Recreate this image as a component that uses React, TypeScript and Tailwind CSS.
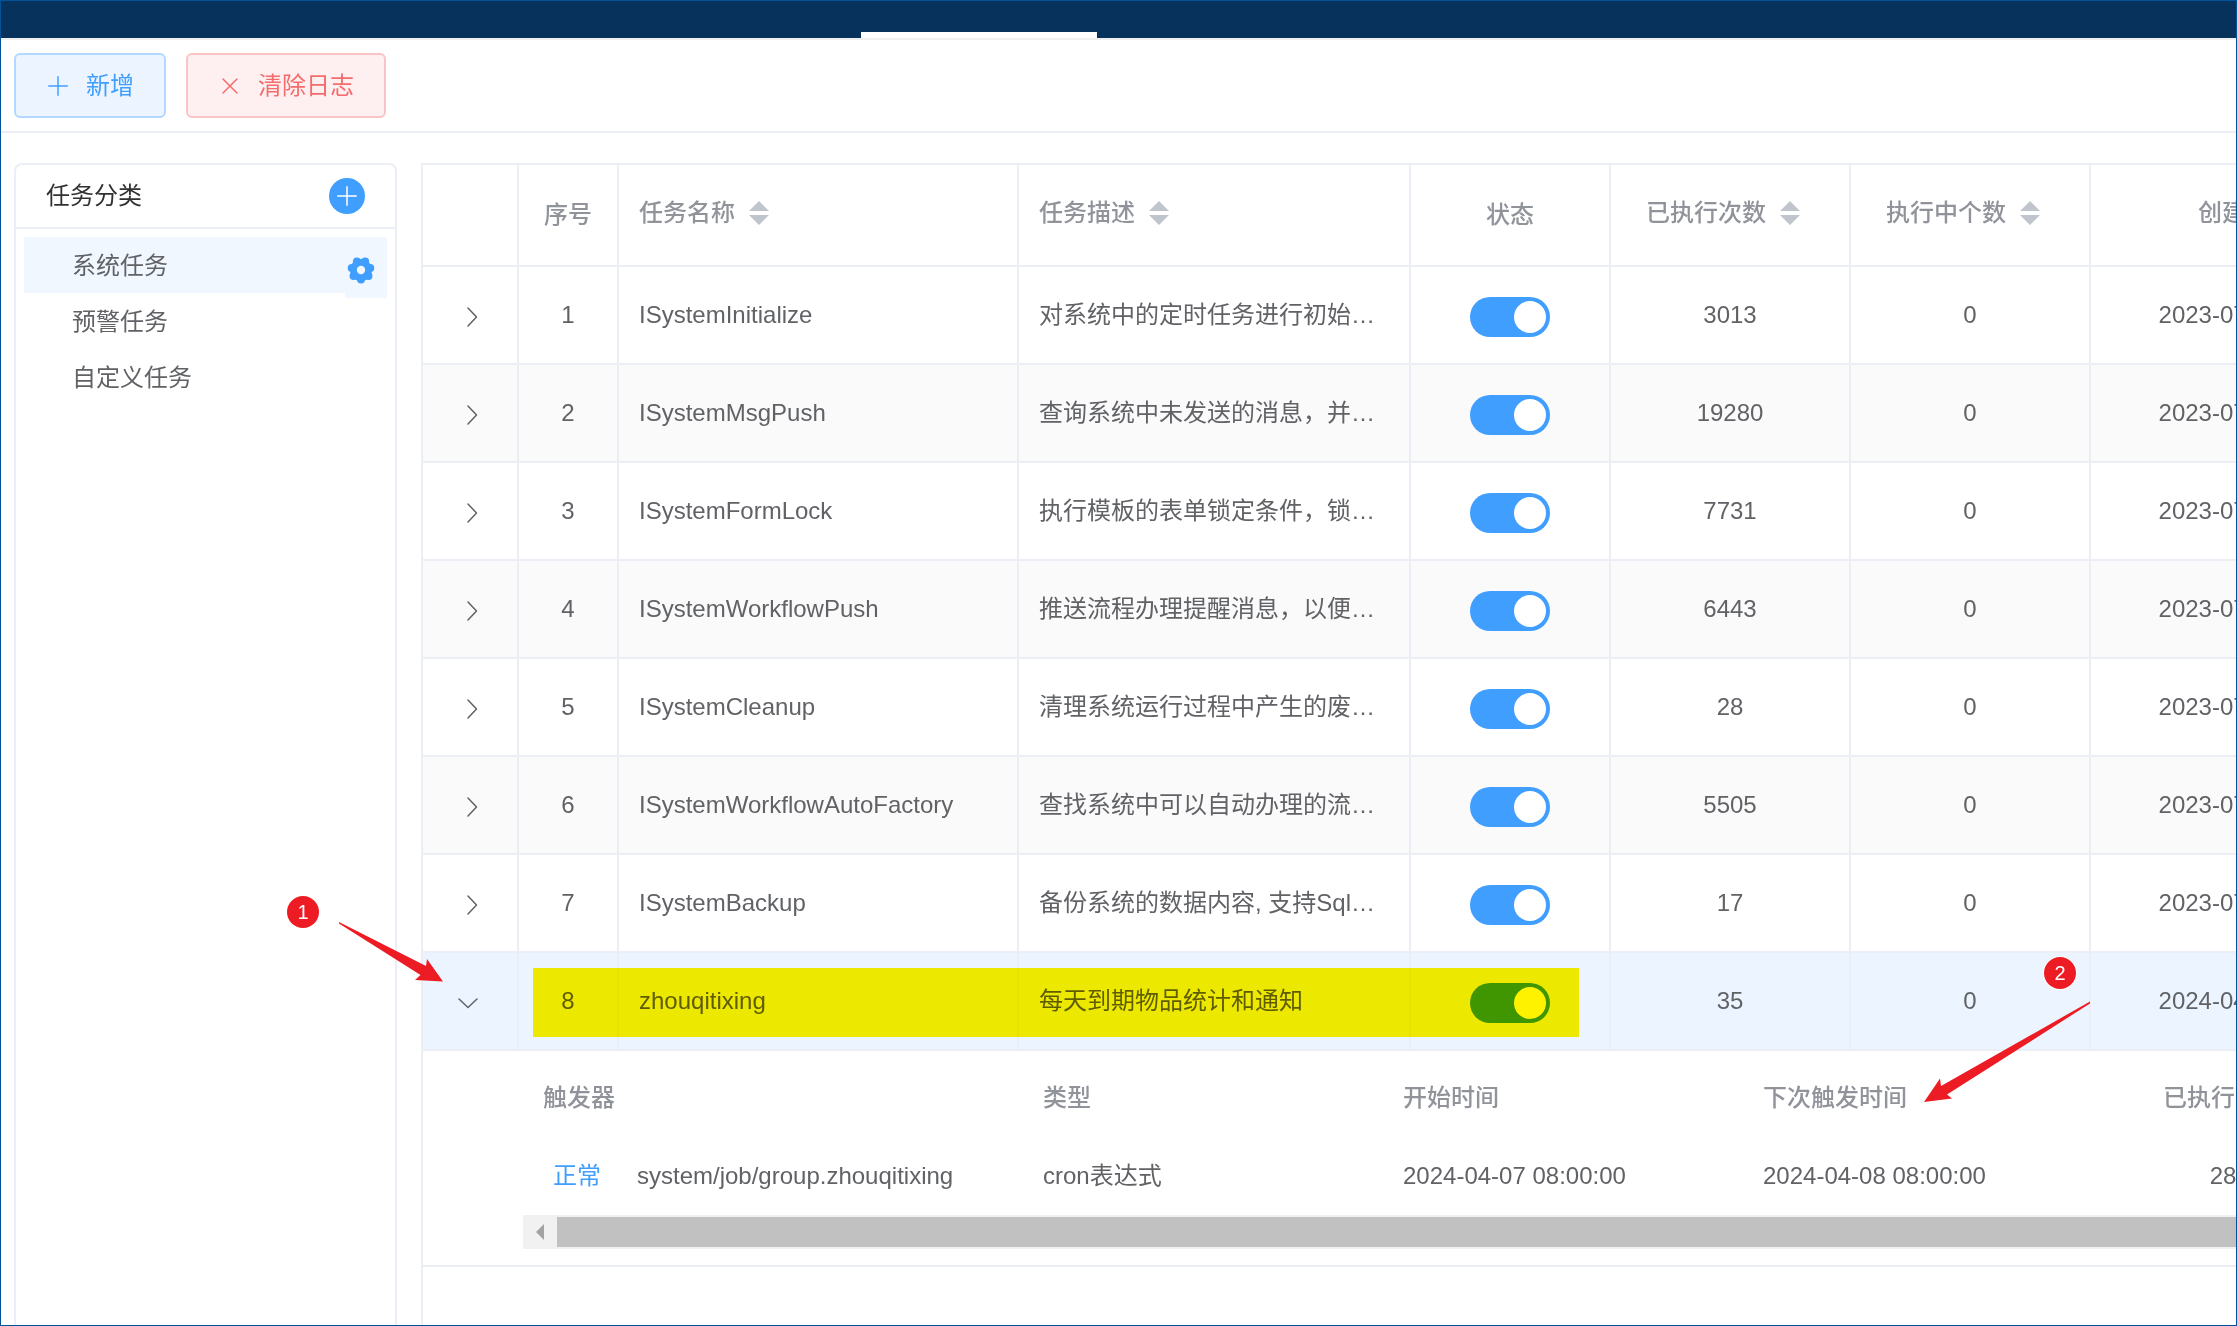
import React from "react";

type Task = { id: number; name: string; desc: string; runs: string; active: string; created: string; expanded?: boolean };

const tasks: Task[] = [
  { id: 1, name: "ISystemInitialize", desc: "对系统中的定时任务进行初始化操作", runs: "3013", active: "0", created: "2023-07-01 08:00:00" },
  { id: 2, name: "ISystemMsgPush", desc: "查询系统中未发送的消息，并进行推送", runs: "19280", active: "0", created: "2023-07-01 08:00:00" },
  { id: 3, name: "ISystemFormLock", desc: "执行模板的表单锁定条件，锁定表单", runs: "7731", active: "0", created: "2023-07-01 08:00:00" },
  { id: 4, name: "ISystemWorkflowPush", desc: "推送流程办理提醒消息，以便及时办理", runs: "6443", active: "0", created: "2023-07-01 08:00:00" },
  { id: 5, name: "ISystemCleanup", desc: "清理系统运行过程中产生的废弃数据", runs: "28", active: "0", created: "2023-07-01 08:00:00" },
  { id: 6, name: "ISystemWorkflowAutoFactory", desc: "查找系统中可以自动办理的流程数据", runs: "5505", active: "0", created: "2023-07-01 08:00:00" },
  { id: 7, name: "ISystemBackup", desc: "备份系统的数据内容, 支持SqlServer", runs: "17", active: "0", created: "2023-07-01 08:00:00" },
  { id: 8, name: "zhouqitixing", desc: "每天到期物品统计和通知", runs: "35", active: "0", created: "2024-04-07 08:00:00", expanded: true },
];

const categories = ["系统任务", "预警任务", "自定义任务"];

function PlusIcon() {
  return (
    <svg className="size-5 shrink-0" viewBox="0 0 20 20" fill="none" stroke="currentColor" strokeWidth="1.5" strokeLinecap="round" aria-hidden="true">
      <path d="M10 .75v18.5M.75 10h18.5" />
    </svg>
  );
}

function CloseIcon() {
  return (
    <svg className="size-5 shrink-0" viewBox="0 0 20 20" fill="none" stroke="currentColor" strokeWidth="1.5" strokeLinecap="round" aria-hidden="true">
      <path d="M3 3l14 14M17 3L3 17" />
    </svg>
  );
}

function GearIcon() {
  const lobes = [0, 1, 2, 3, 4, 5, 6].map((i) => Math.PI / 2 + (i * 2 * Math.PI) / 7);
  return (
    <svg className="size-7" viewBox="-14 -14 28 28" fill="currentColor" aria-hidden="true">
      <circle r="7.6" fill="none" stroke="currentColor" strokeWidth="6.8" />
      {lobes.map((a) => (
        <circle key={a} cx={9.5 * Math.cos(a)} cy={9.5 * Math.sin(a)} r="4" />
      ))}
    </svg>
  );
}

function Chevron({ open }: { open?: boolean }) {
  return (
    <svg className="size-5" viewBox="0 0 20 20" fill="none" stroke="#606266" strokeWidth="1.5" strokeLinecap="round" strokeLinejoin="round" aria-hidden="true">
      <path d={open ? "M1 6l9 8.500l9-8.500" : "M6 1l8.500 9l-8.500 9"} />
    </svg>
  );
}

function SortHeader({ label, center }: { label: string; center?: boolean }) {
  return (
    <button type="button" className={center ? "mx-auto flex items-center gap-3.5 pr-3.5 pb-1" : "flex items-center gap-3.5 pb-1"}>
      <span>{label}</span>
      <svg className="h-6 w-5" viewBox="0 0 20 24" fill="#c0c4cc" aria-hidden="true">
        <path d="M10 0L20 10H0ZM0 14H20L10 24Z" />
      </svg>
    </button>
  );
}

function Toggle({ label }: { label: string }) {
  return (
    <label className="relative mx-auto block h-10 w-20">
      <input type="checkbox" role="switch" defaultChecked aria-label={label} className="peer sr-only" />
      <span className="block h-10 w-20 rounded-full bg-[#dcdfe6] peer-checked:bg-[#409eff]" />
      <span className="absolute top-1 left-1 size-8 rounded-full bg-white peer-checked:left-11" />
    </label>
  );
}

function TriggerTable() {
  return (
    <div className="overflow-hidden pt-2 pb-4 pl-[100px]">
      <table className="w-[1900px] table-fixed border-separate border-spacing-0 text-left">
        <colgroup>
          <col className="w-[500px]" />
          <col className="w-[360px]" />
          <col className="w-[360px]" />
          <col className="w-[360px]" />
          <col className="w-[240px]" />
          <col />
        </colgroup>
        <thead>
          <tr className="h-[78px] text-[#909399]">
            <th className="px-5 font-medium">触发器</th>
            <th className="px-5 font-medium">类型</th>
            <th className="px-5 font-medium">开始时间</th>
            <th className="px-5 font-medium">下次触发时间</th>
            <th className="px-5 text-center font-medium">已执行次数</th>
            <th />
          </tr>
        </thead>
        <tbody>
          <tr className="h-[78px]">
            <td className="px-5">
              <div className="flex items-center gap-9 pl-2.5">
                <button type="button" className="text-[#409eff]">正常</button>
                <span>system/job/group.zhouqitixing</span>
              </div>
            </td>
            <td className="px-5">cron表达式</td>
            <td className="px-5">2024-04-07 08:00:00</td>
            <td className="px-5">2024-04-08 08:00:00</td>
            <td className="px-5 text-center">28</td>
            <td />
          </tr>
        </tbody>
      </table>
      <div className="flex h-[34px] bg-[#f1f1f1] py-0.5">
        <button type="button" aria-label="向左滚动" className="flex w-[34px] shrink-0 items-center justify-center">
          <svg className="h-4 w-2" viewBox="0 0 8 16" fill="#a3a3a3" aria-hidden="true">
            <path d="M8 0V16L0 8Z" />
          </svg>
        </button>
        <div className="flex-1 bg-[#c1c1c1]" />
      </div>
    </div>
  );
}

const cell = "border-r-2 border-b-2 border-[#ebeef5]";

function TaskTable() {
  return (
    <table className="w-[2028px] table-fixed border-separate border-spacing-0 border-t-2 border-[#ebeef5]">
      <colgroup>
        <col className="w-24" />
        <col className="w-[100px]" />
        <col className="w-[400px]" />
        <col className="w-[392px]" />
        <col className="w-[200px]" />
        <col className="w-[240px]" />
        <col className="w-[240px]" />
        <col className="w-[360px]" />
      </colgroup>
      <thead>
        <tr className="h-[102px] text-[#909399]">
          <th className={cell} aria-label="展开" />
          <th className={`${cell} font-medium`}>序号</th>
          <th className={`${cell} px-5 text-left font-medium`}><SortHeader label="任务名称" /></th>
          <th className={`${cell} px-5 text-left font-medium`}><SortHeader label="任务描述" /></th>
          <th className={`${cell} font-medium`}>状态</th>
          <th className={`${cell} font-medium`}><SortHeader label="已执行次数" center /></th>
          <th className={`${cell} font-medium`}><SortHeader label="执行中个数" center /></th>
          <th className={`${cell} font-medium`}><SortHeader label="创建时间" center /></th>
        </tr>
      </thead>
      <tbody>
        {tasks.map((t) => (
          <React.Fragment key={t.id}>
            <tr className={t.expanded ? "h-[98px] bg-[#ecf5ff]" : t.id % 2 === 0 ? "h-[98px] bg-[#fafafa]" : "h-[98px] bg-white"}>
              <td className={cell}>
                <button type="button" aria-label={t.expanded ? "收起" : "展开"} aria-expanded={!!t.expanded} className={t.expanded ? "mx-auto flex pt-1 pr-1" : "mx-auto flex pt-1 pl-1"}>
                  <Chevron open={t.expanded} />
                </button>
              </td>
              <td className={`${cell} text-center`}>{t.id}</td>
              <td className={`${cell} px-5`}>{t.name}</td>
              <td className={`${cell} truncate px-5`}>{t.desc}</td>
              <td className={`${cell} pt-1`}><Toggle label={t.name} /></td>
              <td className={`${cell} text-center`}>{t.runs}</td>
              <td className={`${cell} text-center`}>{t.active}</td>
              <td className={`${cell} text-center`}>{t.created}</td>
            </tr>
            {t.expanded && (
              <tr>
                <td colSpan={8} className={cell}><TriggerTable /></td>
              </tr>
            )}
          </React.Fragment>
        ))}
      </tbody>
    </table>
  );
}

function Annotations() {
  return (
    <>
      <div className="pointer-events-none absolute top-[968px] left-[533px] h-[69px] w-[1046px] bg-[#fff200] mix-blend-multiply" />
      <svg className="pointer-events-none absolute top-[920px] left-[337px] h-16 w-28" viewBox="337 920 112 64" fill="#ed1c24" aria-hidden="true">
        <path d="M339 922L426 966L427 959L443 981.500L415 980L420.500 975L339 923.500Z" />
      </svg>
      <svg className="pointer-events-none absolute top-[1000px] left-[1920px] h-[106px] w-[174px]" viewBox="1920 1000 174 106" fill="#ed1c24" aria-hidden="true">
        <path d="M2090 1001.500L1941 1086L1940 1078.500L1924 1102L1952 1098.500L1947 1094.500L2090 1003.500Z" />
      </svg>
      <span className="absolute top-[896px] left-[287px] flex size-8 items-center justify-center rounded-full bg-[#ed1c24] text-xl leading-none text-white ring-1 ring-white">1</span>
      <span className="absolute top-[957px] left-[2044px] flex size-8 items-center justify-center rounded-full bg-[#ed1c24] text-xl leading-none text-white ring-1 ring-white">2</span>
    </>
  );
}

export default function App() {
  return (
    <div className="relative flex h-screen flex-col overflow-hidden bg-white font-['Liberation_Sans','Noto_Sans_CJK_SC',sans-serif] text-2xl text-[#606266]">
      <header className="flex h-[38px] shrink-0 items-end bg-[#07325c] pl-[861px]">
        <div className="h-1.5 w-[236px] bg-white" />
      </header>
      <div className="flex shrink-0 gap-5 border-y-2 border-t-[#f0f0f0] border-b-[#ebeef5] px-3.5 py-[13px]">
        <button type="button" className="flex h-[65px] items-center gap-[18px] rounded-md border-2 border-[#b3d8ff] bg-[#ecf5ff] pr-[30px] pl-8 text-[#409eff]">
          <PlusIcon />新增
        </button>
        <button type="button" className="flex h-[65px] items-center gap-[18px] rounded-md border-2 border-[#fbc4c4] bg-[#fef0f0] pr-[30px] pl-8 text-[#f56c6c]">
          <CloseIcon />清除日志
        </button>
      </div>
      <main className="flex min-h-0 flex-1 gap-6 pt-[30px] pl-3.5">
        <aside className="w-[383px] shrink-0 rounded-t-lg border-2 border-b-0 border-[#ebeef5]">
          <div className="flex h-16 items-center justify-between border-b-2 border-[#ebeef5] px-[30px] text-[#303133]">
            <h2>任务分类</h2>
            <button type="button" aria-label="新增分类" className="flex size-9 items-center justify-center rounded-full bg-[#409eff] text-white">
              <PlusIcon />
            </button>
          </div>
          <ul className="px-2 pt-2">
            {categories.map((c, i) => (
              <li key={c} className={i === 0 ? "relative flex h-14 items-center bg-[#f0f7ff] pt-0.5 pl-12" : "flex h-14 items-center pt-0.5 pl-12"}>
                <a href="#">{c}</a>
                {i === 0 && (
                  <button type="button" aria-label="设置" className="absolute top-0 right-0 flex h-[61px] w-[42px] items-center justify-center bg-[#f0f7ff] pt-1 pr-2.5 text-[#409eff]">
                    <GearIcon />
                  </button>
                )}
              </li>
            ))}
          </ul>
        </aside>
        <section className="min-w-0 flex-1 overflow-hidden border-l-2 border-[#ebeef5]">
          <TaskTable />
        </section>
      </main>
      <Annotations />
      <div className="pointer-events-none absolute inset-0 border border-[#00529b]" />
    </div>
  );
}
